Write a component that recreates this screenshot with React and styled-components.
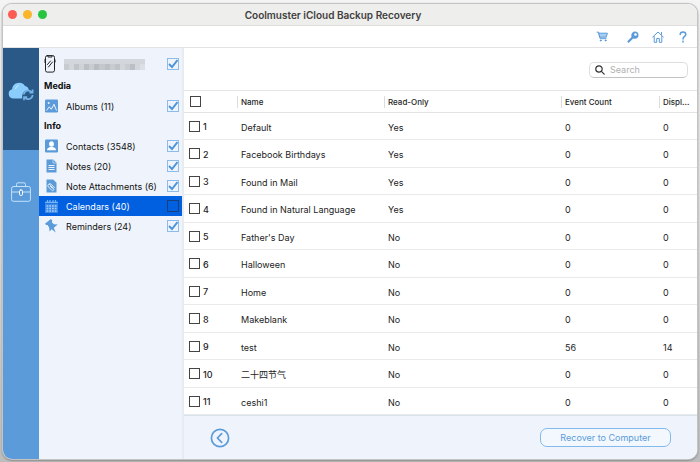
import React, { useState } from "react";
import styled, { createGlobalStyle } from "styled-components";

const BLUE = "#5b9bd9";
const FONT = 'Inter, "Noto Sans CJK SC", sans-serif';

const GlobalStyle = createGlobalStyle`
  * { box-sizing: border-box; }
  body { margin: 0; background: #d6d6d6; font-family: ${FONT}; color: #262626; }
  button, input { font-family: inherit; }
`;

const Desktop = styled.div`
  display: flex;
  min-height: 100vh;
  padding: 4px 3px 3px;
  background: linear-gradient(#f4f4f4, #dcdcdc 50%, #bdbdbd);
`;

const Window = styled.main`
  flex: 1;
  min-width: 0;
  display: flex;
  flex-direction: column;
  overflow: hidden;
  border-radius: 9px;
  background: #fff;
  box-shadow: 0 0 0 1px #c4c4c4, 0 1px 2px 1px #8c8c8c;
`;

const TitleBar = styled.header`
  display: grid;
  grid-template-columns: 60px 1fr 94px;
  align-items: center;
  height: 22px;
  border-bottom: 1px solid #dededc;
  background: #eeeeec;
`;

const Lights = styled.div`
  display: flex;
  gap: 6px;
  padding-left: 5px;
`;

const Light = styled.button`
  width: 9px;
  height: 9px;
  padding: 0;
  border: 0;
  border-radius: 50%;
  background: ${(p) => p.$color};
`;

const Title = styled.h1`
  margin: 0;
  text-align: center;
  font-size: 10px;
  font-weight: 600;
  line-height: 20px;
  color: #404040;
`;

const Toolbar = styled.nav`
  display: flex;
  align-items: center;
  justify-content: flex-end;
  height: 22px;
  padding-right: 8px;
  border-bottom: 1px solid #e2e2e2;
  color: ${BLUE};
`;

const ToolButton = styled.button`
  display: grid;
  place-items: center;
  width: 12px;
  height: 14px;
  margin-left: ${(p) => p.$gap || 13}px;
  padding: 0;
  border: 0;
  background: none;
  color: inherit;
`;

const Body = styled.div`
  flex: 1;
  display: flex;
  min-height: 0;
`;

const Rail = styled.nav`
  display: flex;
  flex-direction: column;
  flex: none;
  width: 36px;
  background: ${BLUE};
`;

const RailButton = styled.button`
  display: grid;
  place-items: center;
  height: ${(p) => (p.$active ? 102 : 84)}px;
  padding: 0;
  padding-bottom: ${(p) => (p.$active ? 16 : 0)}px;
  border: 0;
  background: ${(p) => (p.$active ? "#2a5987" : "transparent")};
  color: #c5e2fa;
`;

const Sidebar = styled.aside`
  flex: none;
  width: 145px;
  border-right: 2px solid #e6ecf1;
  background: #eff4fc;
`;

const Device = styled.label`
  display: flex;
  align-items: center;
  height: 28px;
  padding: 4px 3px 0 5px;
`;

const Redacted = styled.span`
  display: grid;
  grid-template-columns: repeat(16, 1fr);
  width: 81px;
  height: 11px;
  margin: 0 auto 0 8px;
`;

const Tile = styled.i`
  background: linear-gradient(#d3d7dc 50%, ${(p) => p.$tone} 50%);
`;

const GroupTitle = styled.h2`
  margin: 0;
  padding: 0 5px;
  font-size: 9px;
  font-weight: 700;
  line-height: 20px;
  color: #111;
`;

const Item = styled.label`
  display: flex;
  align-items: center;
  gap: 8px;
  height: 20px;
  padding: 0 3px 0 6px;
  background: ${(p) => (p.$selected ? "#0060e0" : "transparent")};
  color: ${(p) => (p.$selected ? "#fff" : "#111")};
  font-size: 9px;
  white-space: nowrap;
`;

const ItemText = styled.span`
  flex: 1;
`;

const SideCheck = styled.input.attrs({ type: "checkbox" })`
  appearance: none;
  flex: none;
  width: 12px;
  height: 12px;
  margin: 0;
  border: 1px solid ${(p) => (p.$dark ? "#173f7c" : "#8cbcea")};
  background: transparent center / 10px 10px no-repeat;
  &:checked {
    background-image: url("data:image/svg+xml,%3Csvg xmlns='http://www.w3.org/2000/svg' viewBox='0 0 10 10'%3E%3Cpath d='M1 5l3 3 5.500-7' fill='none' stroke='%234d93d9' stroke-width='1.900'/%3E%3C/svg%3E");
  }
`;

const Content = styled.section`
  flex: 1;
  min-width: 0;
  display: flex;
  flex-direction: column;
`;

const SearchRow = styled.div`
  display: flex;
  align-items: center;
  justify-content: flex-end;
  height: 43px;
  padding: 2px 9px 0;
  border-bottom: 1px solid #e6e6e6;
`;

const SearchField = styled.label`
  display: flex;
  align-items: center;
  gap: 5px;
  width: 99px;
  height: 16px;
  padding: 0 5px;
  border: 1px solid #dedede;
  border-bottom-color: #c2c2c2;
  border-radius: 5px;
  color: #333;
`;

const SearchInput = styled.input`
  min-width: 0;
  flex: 1;
  padding: 0;
  border: 0;
  outline: 0;
  background: none;
  font-size: 9px;
  line-height: 14px;
  &::placeholder { color: #b0b0b0; }
`;

const Table = styled.table`
  width: 100%;
  table-layout: fixed;
  border-collapse: separate;
  border-spacing: 0;
`;

const Col = styled.col`
  width: ${(p) => (p.$width ? `${p.$width}px` : "auto")};
`;

const HeadRow = styled.tr`
  height: 22px;
`;

const HeadCell = styled.th`
  padding: 0;
  border-bottom: 1px solid #e2e2e2;
  text-align: left;
  vertical-align: middle;
  font-size: 8px;
  font-weight: 500;
  white-space: nowrap;
`;

const HeadLabel = styled.span`
  display: block;
  padding-left: 3px;
  border-left: 1px solid #dcdcdc;
  line-height: 12px;
`;

const Row = styled.tr`
  height: 27px;
  &:nth-child(even) { height: 28px; }
`;

const Cell = styled.td`
  padding: 3px 0 0 4px;
  border-bottom: 1px solid #e9e9e9;
  vertical-align: middle;
  font-size: 9px;
  line-height: 14px;
  white-space: nowrap;
`;

const ValueCell = styled(Cell)`
  color: #1c1c1c;
`;

const PickCell = styled(Cell)`
  padding: 0 0 0 5px;
`;

const Pick = styled.label`
  display: flex;
  align-items: center;
  gap: 3px;
  padding-left: ${(p) => (p.$head ? 6 : 0)}px;
  font-weight: 500;
`;

const PickNumber = styled.span`
  padding-top: 2px;
`;

const RowCheck = styled.input.attrs({ type: "checkbox" })`
  appearance: none;
  width: 11px;
  height: 11px;
  margin: 0;
  border: 1px solid #444;
  background: #fff;
  &:checked { background: ${BLUE}; }
`;

const Footer = styled.footer`
  display: flex;
  flex: 1;
  align-items: center;
  justify-content: space-between;
  min-height: 43px;
  padding: 0 26px;
  border-top: 1px solid #d9e3ec;
  background: #eff4fc;
  color: ${BLUE};
`;

const BackButton = styled.button`
  display: grid;
  padding: 0;
  border: 0;
  background: none;
  color: inherit;
`;

const RecoverButton = styled.button`
  width: 131px;
  height: 19px;
  padding: 0;
  border: 1px solid #83b9ec;
  border-radius: 7px;
  background: #f3f8fe;
  color: #5b9bd9;
  font-size: 9px;
  line-height: 16px;
`;

const Stroke = ({ w, h = w, box = `0 0 ${w} ${h}`, sw = 1, children }) => (
  <svg width={w} height={h} viewBox={box} fill="none" stroke="currentColor" strokeWidth={sw} strokeLinecap="round" strokeLinejoin="round" aria-hidden="true">
    {children}
  </svg>
);

const CartIcon = () => (
  <Stroke w={12} h={11}>
    <path d="M1 1.200h1.700l1.500 6.500h6" />
    <path d="M3 2.200h8.400l-1.200 4H4z" fill="#a9cdf0" />
    <circle cx="4.700" cy="9.500" r=".5" fill="currentColor" />
    <circle cx="9.500" cy="9.500" r=".5" fill="currentColor" />
  </Stroke>
);

const KeyIcon = () => (
  <Stroke w={12}>
    <path d="M5.600 6.400L1.600 10.600" strokeWidth="2.200" />
    <circle cx="7.900" cy="4.200" r="3" fill="currentColor" strokeWidth="1.200" />
    <circle cx="8.500" cy="3.500" r="1.300" fill="#fff" stroke="none" />
  </Stroke>
);

const HomeIcon = () => (
  <Stroke w={12}>
    <path d="M.7 6L6 1l5.300 5M2.200 5.500v5.800h2.500V7.500h2.600v3.800h2.500V5.500M9.500 3.500v-2" />
  </Stroke>
);

const HelpIcon = () => (
  <Stroke w={8} h={12} sw={1.5}>
    <path d="M1.200 3.600C1.200 1.900 2.400 1 4 1s2.800 1 2.800 2.500C6.800 5.300 4 5.500 4 8" />
    <circle cx="4" cy="10.600" r=".3" />
  </Stroke>
);

const CloudIcon = () => (
  <svg width="28" height="20" viewBox="0 0 28 20" aria-hidden="true">
    <path d="M6 17.500a4.700 4.700 0 0 1-.9-9.200A7 7 0 0 1 18 5a5 5 0 0 1 3.800 4c-4.500-.5-7.300 3.800-6.500 8.500z" fill="#8accfb" />
    <path d="M8.500 8a4 4 0 0 1 3-3.500" fill="none" stroke="#cdeaff" />
    <g fill="none" stroke="#75b3e8" strokeWidth="1.700">
      <path d="M16.800 13.500a4.500 4.500 0 0 1 8-2.200M25.600 14a4.500 4.500 0 0 1-8 2.500" />
      <path d="M25.600 8.500v3.200h-3.200M17 19.300v-3.200h3.200" />
    </g>
  </svg>
);

const CaseIcon = () => (
  <Stroke w={20} h={20}>
    <rect x=".6" y="4.500" width="18.800" height="14.800" rx="1.800" />
    <path d="M5.500 4.500V2.300Q5.500.8 7 .8h6q1.500 0 1.500 1.500v2.200M1 10h7M12 10h7" />
    <rect x="8.500" y="8" width="3" height="5.500" rx="1.300" stroke="#fff" />
  </Stroke>
);

const PhoneIcon = () => (
  <Stroke w={12} h={18}>
    <rect x="1.500" y=".6" width="9" height="16.500" rx="1.800" stroke="#222" />
    <path d="M4 1v1h4V1M3.500 9.500l3-3.500M4.500 12l4-5M1 4.500v3M11 5v2" stroke="#222" />
  </Stroke>
);

const Solid = ({ children }) => (
  <svg width="13" height="14" viewBox="0 0 13 14" fill={BLUE} aria-hidden="true">{children}</svg>
);

const AlbumIcon = () => (
  <Solid>
    <rect y=".5" width="13" height="13" rx="1.200" />
    <path d="M1.500 11.500l2.800-3.700 2 2.500 2.700-5 2.500 6.200" fill="none" stroke="#eff4fc" />
    <circle cx="3.700" cy="4" r="1" fill="#eff4fc" />
  </Solid>
);

const ContactIcon = () => (
  <Solid>
    <rect y=".5" width="13" height="13" rx="1.200" />
    <ellipse cx="6.500" cy="5" rx="2.400" ry="2.800" fill="#fff" />
    <path d="M2 11.300c0-2.300 2-3 3.300-3.300h2.400c1.300.3 3.300 1 3.300 3.300z" fill="#fff" />
  </Solid>
);

const NoteIcon = () => (
  <Solid>
    <path d="M1.500.5h6.700l3.300 3.300v9.700h-10z" />
    <path d="M3.500 6.500h6M3.500 8.500h6M3.500 10.500h6" stroke="#eff4fc" />
    <path d="M8 1v3h3" fill="none" stroke="#eff4fc" strokeWidth=".6" />
  </Solid>
);

const AttachmentIcon = () => (
  <Solid>
    <path d="M1.500.5h6.700l3.300 3.300v9.700h-10z" />
    <path d="M4.500 5.300l4 4.200a1.200 1.200 0 0 1-1.800 1.700L3.500 8A1.900 1.900 0 0 1 6.200 5.300L9.500 8.700M5.400 7.300l1.900 2" fill="none" stroke="#eff4fc" strokeWidth=".9" strokeLinecap="round" />
  </Solid>
);

const CalendarIcon = () => (
  <svg width="13" height="13" viewBox="0 0 13 13" aria-hidden="true">
    <path d="M0 2.500h13M2.500 0v3M5 0v3M8 0v3M10.500 0v3" stroke="#75b3f5" strokeWidth="1.300" />
    <path d="M0 4h13v9H0z" fill="#3f8ae8" />
    <path d="M1.500 6h10M1.500 8.500h10M1.500 11h10" stroke="#a5d0fb" strokeWidth="1.500" strokeDasharray="1.750 1" />
  </svg>
);

const PinIcon = () => (
  <Solid>
    <path d="M6 0L7.300 1.400 6.800 3.200 9 5.200 12.800 5.500 8.800 8.700 10.700 13.500 6.700 10.300 4.600 12.400 4.100 8.600 2.600 6.100 1 6 .1 4.600z" />
  </Solid>
);

const SearchIcon = () => (
  <Stroke w={10} sw={1.2}>
    <circle cx="4" cy="4" r="3.200" />
    <path d="M6.400 6.400L9.200 9.200" />
  </Stroke>
);

const BackIcon = () => (
  <Stroke w={20} sw={1.7}>
    <circle cx="10" cy="10" r="8.600" />
    <path d="M11.700 5.700L7.400 10l4.300 4.300" />
  </Stroke>
);

const TONES = ["#c8ccd2", "#d3d6db", "#c1c5ca", "#cfd2d6", "#bcc0c5", "#c9cdd2", "#b9bdc2", "#c4c8cd", "#bcc0c5", "#c8ccd1", "#bfc3c8", "#d2d5da", "#c9ccd1", "#bcc0c5", "#d3d7dd", "#dce0e6"];

const GROUPS = [
  { title: "Media", items: [{ text: "Albums (11)", Icon: AlbumIcon, on: true }] },
  {
    title: "Info",
    items: [
      { text: "Contacts (3548)", Icon: ContactIcon, on: true },
      { text: "Notes (20)", Icon: NoteIcon, on: true },
      { text: "Note Attachments (6)", Icon: AttachmentIcon, on: true },
      { text: "Calendars (40)", Icon: CalendarIcon, on: false, selected: true },
      { text: "Reminders (24)", Icon: PinIcon, on: true },
    ],
  },
];

const ROWS = [
  ["Default", "Yes", 0, 0],
  ["Facebook Birthdays", "Yes", 0, 0],
  ["Found in Mail", "Yes", 0, 0],
  ["Found in Natural Language", "Yes", 0, 0],
  ["Father's Day", "No", 0, 0],
  ["Halloween", "No", 0, 0],
  ["Home", "No", 0, 0],
  ["Makeblank", "No", 0, 0],
  ["test", "No", 56, 14],
  ["二十四节气", "No", 0, 0],
  ["ceshi1", "No", 0, 0],
];

export default function App() {
  const [query, setQuery] = useState("");
  return (
    <>
      <GlobalStyle />
      <Desktop>
        <Window>
          <TitleBar>
            <Lights>
              <Light $color="#fb5b55" aria-label="Close" />
              <Light $color="#f9b62b" aria-label="Minimize" />
              <Light $color="#27c53f" aria-label="Zoom" />
            </Lights>
            <Title>Coolmuster iCloud Backup Recovery</Title>
          </TitleBar>
          <Toolbar>
            <ToolButton aria-label="Buy"><CartIcon /></ToolButton>
            <ToolButton $gap={19} aria-label="Register"><KeyIcon /></ToolButton>
            <ToolButton aria-label="Home"><HomeIcon /></ToolButton>
            <ToolButton aria-label="Help"><HelpIcon /></ToolButton>
          </Toolbar>
          <Body>
            <Rail>
              <RailButton $active aria-label="iCloud backup"><CloudIcon /></RailButton>
              <RailButton aria-label="Toolbox"><CaseIcon /></RailButton>
            </Rail>
            <Sidebar>
              <Device>
                <PhoneIcon />
                <Redacted>{TONES.map((tone, i) => <Tile key={i} $tone={tone} />)}</Redacted>
                <SideCheck defaultChecked aria-label="Select device" />
              </Device>
              {GROUPS.map((group) => (
                <React.Fragment key={group.title}>
                  <GroupTitle>{group.title}</GroupTitle>
                  {group.items.map(({ text, Icon, on, selected }) => (
                    <Item key={text} $selected={selected}>
                      <Icon />
                      <ItemText>{text}</ItemText>
                      <SideCheck defaultChecked={on} $dark={selected} />
                    </Item>
                  ))}
                </React.Fragment>
              ))}
            </Sidebar>
            <Content>
              <SearchRow>
                <SearchField>
                  <SearchIcon />
                  <SearchInput aria-label="Search" placeholder="Search" value={query} onChange={(e) => setQuery(e.target.value)} />
                </SearchField>
              </SearchRow>
              <Table>
                <colgroup>
                  <Col $width={53} />
                  <Col $width={147} />
                  <Col />
                  <Col $width={98} />
                  <Col $width={38} />
                </colgroup>
                <thead>
                  <HeadRow>
                    <HeadCell><Pick $head><RowCheck aria-label="Select all" /></Pick></HeadCell>
                    {["Name", "Read-Only", "Event Count", "Displ..."].map((h) => (
                      <HeadCell key={h}><HeadLabel>{h}</HeadLabel></HeadCell>
                    ))}
                  </HeadRow>
                </thead>
                <tbody>
                  {ROWS.map((row, i) => (
                    <Row key={row[0]}>
                      <PickCell><Pick><RowCheck /><PickNumber>{i + 1}</PickNumber></Pick></PickCell>
                      {row.map((value, c) => <ValueCell key={c}>{value}</ValueCell>)}
                    </Row>
                  ))}
                </tbody>
              </Table>
              <Footer>
                <BackButton aria-label="Back"><BackIcon /></BackButton>
                <RecoverButton>Recover to Computer</RecoverButton>
              </Footer>
            </Content>
          </Body>
        </Window>
      </Desktop>
    </>
  );
}
